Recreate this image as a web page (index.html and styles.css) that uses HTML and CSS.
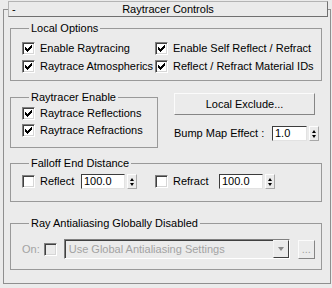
FILE: index.html
```html
<!DOCTYPE html>
<html lang="en">
  <head>
    <meta charset="UTF-8" />
    <title>Raytracer Controls</title>
    <link rel="stylesheet" href="styles.css">
  </head>

  <body>
    <div class="rollout">
      <div class="rollout-head">
        <span class="toggle">-</span>
        <span class="rollout-title">Raytracer Controls</span>
      </div>

      <div class="group local">
        <div class="group-title">Local Options</div>
        <div class="grid2 rows18">
          <label class="check"><span class="box"><svg width="7" height="7" viewBox="0 0 7 7"><polygon points="0,2 1,2 1,3 2,3 2,4 3,4 3,3 4,3 4,2 5,2 5,1 6,1 6,0 7,0 7,3 6,3 6,4 5,4 5,5 4,5 4,6 3,6 3,7 2,7 2,6 1,6 1,5 0,5" /></svg></span>Enable Raytracing</label>
          <label class="check"><span class="box"><svg width="7" height="7" viewBox="0 0 7 7"><polygon points="0,2 1,2 1,3 2,3 2,4 3,4 3,3 4,3 4,2 5,2 5,1 6,1 6,0 7,0 7,3 6,3 6,4 5,4 5,5 4,5 4,6 3,6 3,7 2,7 2,6 1,6 1,5 0,5" /></svg></span>Enable Self Reflect / Refract</label>
          <label class="check"><span class="box"><svg width="7" height="7" viewBox="0 0 7 7"><polygon points="0,2 1,2 1,3 2,3 2,4 3,4 3,3 4,3 4,2 5,2 5,1 6,1 6,0 7,0 7,3 6,3 6,4 5,4 5,5 4,5 4,6 3,6 3,7 2,7 2,6 1,6 1,5 0,5" /></svg></span>Raytrace Atmospherics</label>
          <label class="check"><span class="box"><svg width="7" height="7" viewBox="0 0 7 7"><polygon points="0,2 1,2 1,3 2,3 2,4 3,4 3,3 4,3 4,2 5,2 5,1 6,1 6,0 7,0 7,3 6,3 6,4 5,4 5,5 4,5 4,6 3,6 3,7 2,7 2,6 1,6 1,5 0,5" /></svg></span>Reflect / Refract Material IDs</label>
        </div>
      </div>

      <div class="middle">
        <div class="group enable">
          <div class="group-title">Raytracer Enable</div>
          <div class="rows17">
            <label class="check"><span class="box"><svg width="7" height="7" viewBox="0 0 7 7"><polygon points="0,2 1,2 1,3 2,3 2,4 3,4 3,3 4,3 4,2 5,2 5,1 6,1 6,0 7,0 7,3 6,3 6,4 5,4 5,5 4,5 4,6 3,6 3,7 2,7 2,6 1,6 1,5 0,5" /></svg></span>Raytrace Reflections</label>
            <label class="check"><span class="box"><svg width="7" height="7" viewBox="0 0 7 7"><polygon points="0,2 1,2 1,3 2,3 2,4 3,4 3,3 4,3 4,2 5,2 5,1 6,1 6,0 7,0 7,3 6,3 6,4 5,4 5,5 4,5 4,6 3,6 3,7 2,7 2,6 1,6 1,5 0,5" /></svg></span>Raytrace Refractions</label>
          </div>
        </div>

        <div class="side">
          <div class="button exclude">Local Exclude...</div>
          <div class="bump">
            <span>Bump Map Effect :</span>
            <span class="field bump-field">1.0</span>
            <span class="spin"><i class="up"></i><i class="dn"></i></span>
          </div>
        </div>
      </div>

      <div class="group falloff">
        <div class="group-title">Falloff End Distance</div>
        <div class="grid2 fall-row">
          <div class="cell">
            <label class="check reflect"><span class="box"></span>Reflect</label>
            <span class="field">100.0</span>
            <span class="spin"><i class="up"></i><i class="dn"></i></span>
          </div>
          <div class="cell">
            <label class="check refract"><span class="box"></span>Refract</label>
            <span class="field">100.0</span>
            <span class="spin"><i class="up"></i><i class="dn"></i></span>
          </div>
        </div>
      </div>

      <div class="group aa">
        <div class="group-title">Ray Antialiasing Globally Disabled</div>
        <div class="aa-row">
          <span class="dim">On:</span>
          <span class="box off"></span>
          <div class="select">
            <span class="dim">Use Global Antialiasing Settings</span>
            <span class="select-arrow"><i></i></span>
          </div>
          <div class="button dots dim">...</div>
        </div>
      </div>
    </div>
  </body>
</html>
```

FILE: styles.css
```css
body {
  margin: 0;
  background-color: #ebebeb;
  font-family: "Liberation Sans", Arial, sans-serif;
  font-size: 11px;
  line-height: 13px;
  color: #000;
}

.rollout {
  margin: 9px 1px 0 3px;
  border: 1px solid #8f8f8f;
  padding: 0 8px 13px 6px;
}

.rollout-head {
  margin: -9px -6px 0 -2px;
  height: 16px;
  box-sizing: border-box;
  border: 1px solid;
  border-color: #b4b4b4 #707070 #707070 #b4b4b4;
  background-color: #ebebeb;
  display: grid;
  grid-template-columns: 1fr auto 1fr;
  align-items: center;
}

.toggle {
  padding-left: 3px;
}

.group {
  border: 1px solid #999;
}

.group-title {
  margin: -7px 0 0 7px;
  padding: 0 2px;
  width: fit-content;
  background-color: #ebebeb;
}

.grid2 {
  display: grid;
  grid-template-columns: 133px auto;
}

.rows18 {
  grid-auto-rows: 18px;
  margin-top: 4px;
}

.rows17 {
  display: grid;
  grid-auto-rows: 17px;
  margin-top: 1px;
}

.local {
  margin-top: 11px;
  padding: 0 0 5px 11px;
}

.check {
  display: flex;
  align-items: center;
  gap: 5px;
  white-space: nowrap;
}

.box {
  width: 13px;
  height: 13px;
  box-sizing: border-box;
  flex: none;
  border: 1px solid;
  border-color: #808080 #fff #fff #808080;
  box-shadow: inset 1px 1px #404040, inset -1px -1px #d6d6d6;
  background-color: #fff;
  display: flex;
  align-items: center;
  justify-content: center;
}

.box svg {
  fill: #000;
}

.box.off {
  background-color: #ebebeb;
}

.middle {
  margin-top: 12px;
  display: flex;
  align-items: flex-start;
}

.enable {
  margin-top: 4px;
  width: 148px;
  box-sizing: border-box;
  padding: 0 0 8px 11px;
}

.side {
  margin-left: 16px;
  width: 145px;
}

.button {
  box-sizing: border-box;
  border: 1px solid;
  border-color: #fbfbfb #858585 #858585 #fbfbfb;
  display: flex;
  align-items: center;
  justify-content: center;
}

.exclude {
  width: 141px;
  height: 22px;
}

.bump {
  margin-top: 11px;
  display: flex;
  align-items: center;
}

.field {
  width: 44px;
  height: 15px;
  box-sizing: border-box;
  padding-left: 2px;
  border: 1px solid;
  border-color: #3c3c3c #e2e2e2 #e2e2e2 #3c3c3c;
  background-color: #fff;
  line-height: 13px;
}

.bump-field {
  width: 35px;
  margin-left: auto;
}

.spin {
  width: 10px;
  height: 15px;
  box-sizing: border-box;
  margin-left: 2px;
  border: 1px solid;
  border-color: #fdfdfd #a8a8a8 #a8a8a8 #fdfdfd;
  display: flex;
  flex-direction: column;
  align-items: center;
  justify-content: center;
  gap: 2px;
}

.spin i {
  width: 0;
  height: 0;
  border-left: 2.5px solid transparent;
  border-right: 2.5px solid transparent;
}

.spin .up {
  border-bottom: 3px solid #000;
}

.spin .dn {
  border-top: 3px solid #000;
}

.falloff {
  margin-top: 15px;
  padding: 0 0 12px 11px;
}

.fall-row {
  margin-top: 4px;
}

.cell {
  display: flex;
  align-items: center;
}

.reflect {
  width: 59px;
}

.refract {
  width: 64px;
}

.aa {
  margin-top: 21px;
  padding: 0 0 10px 11px;
}

.aa-row {
  margin-top: 9px;
  display: flex;
  align-items: center;
}

.dim {
  color: #a3a3a3;
}

.aa-row .box {
  margin-left: 4px;
}

.select {
  margin-left: 7px;
  width: 226px;
  height: 20px;
  box-sizing: border-box;
  border: 1px solid;
  border-color: #808080 #fff #fff #808080;
  box-shadow: inset 1px 1px #404040;
  padding-left: 4px;
  display: flex;
  align-items: center;
  justify-content: space-between;
}

.select-arrow {
  width: 16px;
  height: 18px;
  box-sizing: border-box;
  border: 1px solid;
  border-color: #f4f4f4 #404040 #404040 #f4f4f4;
  display: flex;
  align-items: center;
  justify-content: center;
}

.select-arrow i {
  width: 0;
  height: 0;
  border-left: 3.5px solid transparent;
  border-right: 3.5px solid transparent;
  border-top: 4px solid #8a8a8a;
}

.dots {
  margin-left: 8px;
  width: 17px;
  height: 19px;
  line-height: 10px;
}
```
